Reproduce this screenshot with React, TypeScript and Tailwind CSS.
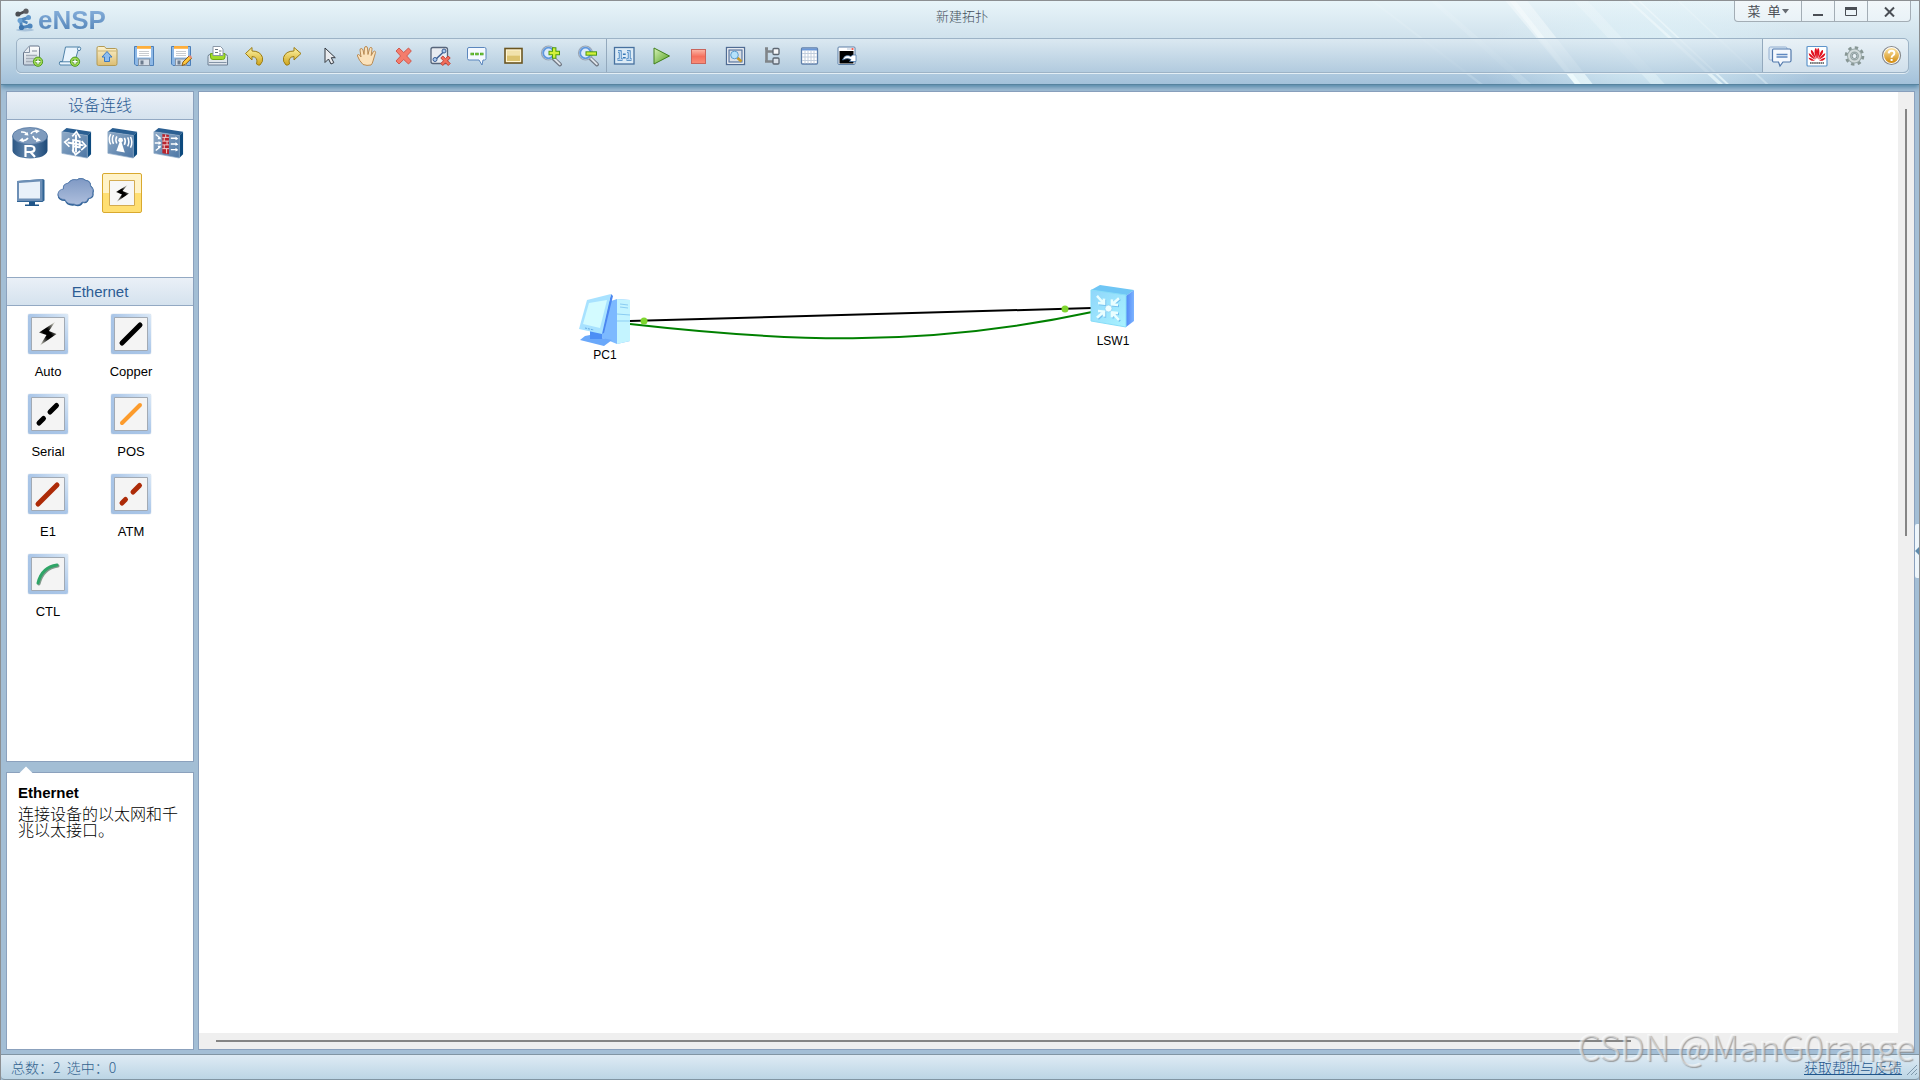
import type { ReactNode } from "react";

const CJK = "font-['Liberation_Sans','Noto_Sans_CJK_SC',sans-serif]";

type Item = { label: string; icon: ReactNode };

function Gradients() {
  return (
    <svg width="0" height="0" className="absolute" aria-hidden="true">
      <defs>
        <linearGradient id="paper" x1="0" y1="0" x2="0" y2="1">
          <stop offset="0" stopColor="#ffffff" />
          <stop offset="1" stopColor="#c9d3de" />
        </linearGradient>
        <linearGradient id="gold" x1="0" y1="0" x2="0" y2="1">
          <stop offset="0" stopColor="#fff6a8" />
          <stop offset="1" stopColor="#cfa51c" />
        </linearGradient>
        <linearGradient id="folder" x1="0" y1="0" x2="0" y2="1">
          <stop offset="0" stopColor="#fdf3cf" />
          <stop offset="1" stopColor="#dcbd72" />
        </linearGradient>
        <linearGradient id="red" x1="0" y1="0" x2="0" y2="1">
          <stop offset="0" stopColor="#fbb9a9" />
          <stop offset="0.5" stopColor="#f5705d" />
          <stop offset="1" stopColor="#f98d78" />
        </linearGradient>
        <linearGradient id="green" x1="0" y1="0" x2="1" y2="1">
          <stop offset="0" stopColor="#d8f3b8" />
          <stop offset="1" stopColor="#4f9d1d" />
        </linearGradient>
        <linearGradient id="steel" x1="0" y1="0" x2="1" y2="1">
          <stop offset="0" stopColor="#8faac7" />
          <stop offset="1" stopColor="#4d77a5" />
        </linearGradient>
        <linearGradient id="cloud" x1="0" y1="0" x2="0" y2="1">
          <stop offset="0" stopColor="#7f99c4" />
          <stop offset="1" stopColor="#aebfdd" />
        </linearGradient>
        <linearGradient id="barrel" x1="0" y1="0" x2="1" y2="0">
          <stop offset="0" stopColor="#2c5784" />
          <stop offset="0.45" stopColor="#6387ae" />
          <stop offset="1" stopColor="#1e4a79" />
        </linearGradient>
        <linearGradient id="orange" x1="0" y1="0" x2="0" y2="1">
          <stop offset="0" stopColor="#fbe3a4" />
          <stop offset="1" stopColor="#d18a0c" />
        </linearGradient>
        <linearGradient id="bolt" x1="1" y1="0" x2="0" y2="1">
          <stop offset="0.1" stopColor="#c9c9be" />
          <stop offset="0.42" stopColor="#000000" />
          <stop offset="0.6" stopColor="#000000" />
          <stop offset="0.95" stopColor="#d9d9ce" />
        </linearGradient>
        <linearGradient id="ice" x1="0" y1="0" x2="1" y2="1">
          <stop offset="0" stopColor="#8fd6fb" />
          <stop offset="1" stopColor="#a9f3ff" />
        </linearGradient>
        <linearGradient id="blueSide" x1="0" y1="0" x2="1" y2="0">
          <stop offset="0" stopColor="#4f87f5" />
          <stop offset="1" stopColor="#7db4ff" />
        </linearGradient>
      </defs>
    </svg>
  );
}

function Icon({ children }: { children: ReactNode }) {
  return (
    <svg viewBox="0 0 24 24" width="24" height="24" aria-hidden="true" fill="none">
      {children}
    </svg>
  );
}

function PlusBadge() {
  return (
    <g>
      <circle cx="17" cy="17.7" r="4.6" fill="#a4dd55" stroke="#4c9a1c" />
      <path d="M17 15v5.4M14.3 17.7h5.4" stroke="#2f7a0c" strokeWidth="2.6" />
      <path d="M17 15.2v5M14.5 17.7h5" stroke="#fff" strokeWidth="1.4" />
    </g>
  );
}

function Floppy() {
  return (
    <g>
      <path d="M2.500 2.500h19v19h-17.500l-1.500-1.500z" fill="#8db8e6" stroke="#4c7fb8" />
      <rect x="5" y="2" width="14" height="11.500" fill="#fff" />
      <rect x="5" y="2" width="14" height="2.800" fill="#fdae3c" />
      <path d="M7 7.500h10M7 9.500h10M7 11.500h10" stroke="#c9ccd0" />
      <rect x="6.500" y="15" width="11" height="6.500" fill="#d5dde6" stroke="#8594a5" />
      <rect x="8.500" y="16.500" width="3" height="4" fill="#6d7c8e" />
    </g>
  );
}

function Lens({ minus }: { minus?: boolean }) {
  return (
    <Icon>
      <path d="M14.500 14.500l6.500 6" stroke="#6f7783" strokeWidth="4" strokeLinecap="round" />
      <path d="M15 14.500l5.800 5.600" stroke="#dfe4ea" strokeWidth="2" strokeLinecap="round" />
      <circle cx="9.500" cy="9" r="7" fill="#cfe2f7" stroke="#9aa5b3" strokeWidth="1.200" />
      <circle cx="9.500" cy="9" r="5.300" fill="#dcebfb" stroke="#5f97dc" strokeWidth="1.800" />
      <path d={minus ? "M9.500 9.500h11.500" : "M9.500 9h11.500M15.200 3.200v11.600"} stroke="#4c9a10" strokeWidth="4.400" />
      <path d={minus ? "M10.500 9.500h9.500" : "M10.500 9h9.500M15.200 4.200v9.600"} stroke="#d2f03a" strokeWidth="2.400" />
    </Icon>
  );
}

const editTools: Item[] = [
  {
    label: "新建拓扑",
    icon: (
      <Icon>
        <path d="M2.500 8.500l6-6.500h8.500q1.500 0 1.500 1.500V20q0 1-1 1h-14q-1 0-1-1z" fill="url(#paper)" stroke="#67758a" />
        <path d="M2.800 8.500h5.700V2.500" stroke="#8593a5" fill="#e8edf3" />
        <path d="M11 7h5M5 11.500h11M5 14.500h11M5 17.500h8" stroke="#a5adb8" strokeWidth="1.300" />
        <PlusBadge />
      </Icon>
    ),
  },
  {
    label: "新建试卷工程",
    icon: (
      <Icon>
        <path d="M7.500 3h14.500q1.500 1.500 0 3.500h-2l-3.500 12-1.500 2.500H2q-1.500-2 0-3.500h2.500z" fill="#e9f4fd" stroke="#4f82a8" />
        <path d="M2 17.800h12" stroke="#4f82a8" />
        <path d="M20 6.500q-1.500-2 .5-3.500" stroke="#4f82a8" />
        <PlusBadge />
      </Icon>
    ),
  },
  {
    label: "打开",
    icon: (
      <Icon>
        <path d="M2 4q0-1.500 1.500-1.500h6l1.500 2h9.500q1.500 0 1.500 1.500v13.500q0 2-1.500 2h-17q-1.500 0-1.500-1.500z" fill="url(#folder)" stroke="#b39a55" />
        <path d="M2.500 7h19" stroke="#cdb473" />
        <path d="M12 7.500l5 5.500h-2.500v4.500h-5V13H7z" fill="#8dbdf0" stroke="#3e79c0" />
      </Icon>
    ),
  },
  { label: "保存", icon: <Icon><Floppy /></Icon> },
  {
    label: "另存为",
    icon: (
      <Icon>
        <Floppy />
        <path d="M13 21.500l1-3.500 6-6 2.500 2.300-6 6z" fill="#ffc83d" stroke="#8c5c14" />
        <path d="M19.500 12.500l1.500-1.500 2.200 2.200-1.400 1.400z" fill="#e58a7c" />
      </Icon>
    ),
  },
  {
    label: "打印",
    icon: (
      <Icon>
        <path d="M2 12.500q0-2 2-2h15.500q2 0 2 2v8.500H2z" fill="#dfe6ed" stroke="#6c7f92" />
        <path d="M4.500 9.500h14.500v3.500q0 2.500-2.500 2.500h-9.500q-2.500 0-2.500-2.500z" fill="#a2db2a" stroke="#6eab12" />
        <path d="M7 2.500h7.500l2.500 2.500v6.500H7z" fill="#fff" stroke="#8b98a7" />
        <path d="M9 5.500h3M13 7h2.500M9 8.500h3M13 10h2" stroke="#6a7480" />
        <path d="M3 18.500h17.500" stroke="#8494a6" />
      </Icon>
    ),
  },
  {
    label: "撤销",
    icon: (
      <Icon>
        <path d="M2.500 9.500L9 3.500v3.500q8.500 0 10.500 6.500 1 4-2.500 7.500-2 .5-3.500-1 2-7-4.500-7.500v3.500z" fill="url(#gold)" stroke="#9c7c14" strokeLinejoin="round" />
      </Icon>
    ),
  },
  {
    label: "恢复",
    icon: (
      <Icon>
        <path d="M21 9.500L14 3.500v3.500q-8.500 0-10.500 6.500-1 4 2.500 7.500 2 .5 3.500-1-2-7 4.500-7.500v3.500z" fill="url(#gold)" stroke="#9c7c14" strokeLinejoin="round" />
      </Icon>
    ),
  },
  {
    label: "选择",
    icon: (
      <Icon>
        <path d="M8 4v14.500l3.500-3.500 2.500 5 2.800-1.300-2.500-5h4z" fill="#e9ebee" stroke="#33383f" strokeLinejoin="round" />
      </Icon>
    ),
  },
  {
    label: "拖动",
    icon: (
      <Icon>
        <path d="M9 20.500q-4-4-5.500-8.500-.5-1.500 1-1.500 1.200.3 2.500 2.500L6 6q0-1.500 1.200-1.500T9 6l1 4.500L10.500 4q.2-1.500 1.500-1.500T13.500 4l.5 6.500 1.500-6q.5-1.300 1.700-1T18 5.200l-.8 6.300 2.300-4q1-1 2 .2.300.8-.3 2L19 17q-.5 2.500-2 4-4 1-8-.5z" fill="#fbe2bb" stroke="#b98a52" strokeLinejoin="round" />
      </Icon>
    ),
  },
  {
    label: "删除",
    icon: (
      <Icon>
        <path d="M5 7l3-3 4.700 4.500L17.500 4l2.800 3-4.600 5 4.600 5-2.800 3-4.800-4.500L8 20l-3-3 4.600-5z" fill="#f47c6c" stroke="#d0594e" strokeLinejoin="round" />
      </Icon>
    ),
  },
  {
    label: "删除所有连线",
    icon: (
      <Icon>
        <rect x="3" y="3.500" width="16.500" height="16" rx="2" fill="#e8ecf1" stroke="#57657a" strokeWidth="1.300" />
        <path d="M7 16L16.500 7" stroke="#3c5f94" strokeWidth="1.500" />
        <circle cx="7" cy="15.500" r="2" fill="#a8c8ee" stroke="#3c5f94" />
        <circle cx="16" cy="7" r="2" fill="#a8c8ee" stroke="#3c5f94" />
        <path d="M12.800 14l2-2 2.700 2.700L20.200 12l2 2-2.700 2.800 2.700 2.700-2 2-2.700-2.700-2.700 2.700-2-2 2.700-2.700z" fill="#f26f5c" stroke="#c33f34" />
      </Icon>
    ),
  },
  {
    label: "文本",
    icon: (
      <Icon>
        <path d="M4 3.500h15.500q1.500 0 1.500 1.500v9.500q0 1.500-1.500 1.500H18l-1 5-3-5H4q-1.500 0-1.500-1.500V5q0-1.500 1.500-1.500z" fill="#f4f9ff" stroke="#5b86bd" />
        <path d="M5.500 10h3.500M10.200 10h3.500M15 10h3.500" stroke="#3f9c1a" strokeWidth="2.400" />
        <path d="M6 10h2.500M10.700 10h2.500M15.500 10H18" stroke="#8fd94b" />
      </Icon>
    ),
  },
  {
    label: "调色板",
    icon: (
      <Icon>
        <rect x="3" y="4.500" width="17" height="14.500" fill="#fff6d5" stroke="#6b5520" strokeWidth="1.600" />
        <rect x="5" y="6.500" width="13" height="5" fill="#f1e2ac" />
        <rect x="5" y="11.500" width="13" height="5.500" fill="#dcc36f" />
      </Icon>
    ),
  },
  { label: "放大", icon: <Lens /> },
  { label: "缩小", icon: <Lens minus /> },
];

const runTools: Item[] = [
  {
    label: "原始大小",
    icon: (
      <Icon>
        <rect x="2.500" y="3.500" width="19.500" height="16.500" fill="#dcebf6" stroke="#47719f" strokeWidth="1.300" />
        <path d="M6 7.700h2.200V15M5.500 15.300h5M15 7.700h2.200V15M14.500 15.300h5M12.300 9.500v1.500M12.300 13v1.500" stroke="#3679b8" strokeWidth="2.800" />
        <path d="M6 7.700h2.200V15M5.700 15.300h4.600M15 7.700h2.200V15M14.700 15.300h4.600" stroke="#dff0ff" strokeWidth="1.100" />
      </Icon>
    ),
  },
  {
    label: "开启设备",
    icon: <Icon><path d="M5 4v16L20.500 12z" fill="url(#green)" stroke="#41801c" strokeLinejoin="round" /></Icon>,
  },
  {
    label: "停止设备",
    icon: <Icon><rect x="5.500" y="5.500" width="14" height="14" fill="url(#red)" stroke="#c9655c" /></Icon>,
  },
  {
    label: "采集数据报文",
    icon: (
      <Icon>
        <rect x="3.500" y="3.500" width="18" height="17" fill="#fff" stroke="#506c93" strokeWidth="1.300" />
        <rect x="6" y="6" width="13" height="12" fill="#d9dfe7" stroke="#5f7ba3" strokeWidth="1.300" />
        <path d="M14 13.500l4.500 4" stroke="#c79b2a" strokeWidth="2.600" />
        <circle cx="11.500" cy="11" r="3.800" fill="#b5e2fb" stroke="#5e9fd1" />
      </Icon>
    ),
  },
  {
    label: "拓扑树",
    icon: (
      <Icon>
        <path d="M6.500 3.500v14.500M6.500 7.500h7M5 17.500h8.500M5 4.500h3" stroke="#808589" strokeWidth="2.600" />
        <rect x="13" y="4.500" width="6" height="6" rx="1" fill="#f7f8fa" stroke="#5c6671" strokeWidth="1.300" />
        <rect x="13" y="14" width="6" height="6" rx="1" fill="#dbe2ea" stroke="#5c6671" strokeWidth="1.300" />
      </Icon>
    ),
  },
  {
    label: "接口列表",
    icon: (
      <Icon>
        <rect x="4.500" y="4" width="16" height="16" rx="1" fill="#fff" stroke="#6080ab" strokeWidth="1.300" />
        <path d="M5 5.500h15" stroke="#6b98d8" strokeWidth="2" />
        <path d="M5 9.500h15M5 13h15M5 16.500h15M8 6.500v13M11 6.500v13M14 6.500v13M17 6.500v13" stroke="#c2cedd" />
      </Icon>
    ),
  },
  {
    label: "命令行",
    icon: (
      <Icon>
        <rect x="4" y="3" width="17" height="17.500" rx="1" fill="#fff" stroke="#5c7fa6" />
        <rect x="5.500" y="7" width="14" height="12.500" fill="#000" />
        <path d="M13.500 5h1M15.500 5h1" stroke="#6b8db5" />
        <path d="M17.500 5h2" stroke="#f03020" strokeWidth="1.500" />
        <path d="M8.500 16q2.500-6.500 8.500-3.500l1.500-1.500h3.500v6.500h-6.500l1.500-2q-3.500-2-8.500.5z" fill="#fff" stroke="#3c6ea5" strokeWidth=".7" />
      </Icon>
    ),
  },
];

const helpTools: Item[] = [
  {
    label: "论坛",
    icon: (
      <Icon>
        <rect x="1" y="3" width="18" height="13" rx="1.500" fill="#dbe8f5" stroke="#94afd0" />
        <path d="M5.500 5h16q1.500 0 1.500 1.500v10q0 1.500-1.500 1.500H15l-3 4-1.500-4h-5q-1 0-1-1.500v-10Q4.500 5 5.500 5z" fill="#f4f8fd" stroke="#5178ab" strokeWidth="1.200" />
        <path d="M8.500 10.500h11M8.500 13h11" stroke="#5e87c0" strokeWidth="1.300" />
      </Icon>
    ),
  },
  {
    label: "华为官网",
    icon: (
      <Icon>
        <rect x="2" y="2.500" width="20" height="19.500" rx="1" fill="#fff" stroke="#5e95cb" strokeWidth="1.200" />
        <g fill="#e11220">
          <path d="M11.700 15Q8 8 10.500 4q1.500.3 1.500 4zM12.300 15q3.700-7 1.200-11-1.500.3-1.500 4z" />
          <path d="M10.900 15.200Q5 9.500 6 6q2.500-.2 5 9.200zM13.100 15.200Q19 9.500 18 6q-2.500-.2-5 9.200z" />
          <path d="M10.500 15.800q-7-3-6.800-6.500 2.300.2 6.800 6.500zM13.500 15.800q7-3 6.800-6.500-2.300.2-6.800 6.500z" />
          <path d="M10 16.700q-5.500.6-6.500-3 2.200-.2 6.500 3zM14 16.700q5.500.6 6.500-3-2.200-.2-6.500 3z" />
        </g>
        <path d="M5 19h14" stroke="#4d4d4d" strokeWidth="1.600" strokeDasharray="1.600 .5" />
      </Icon>
    ),
  },
  {
    label: "选项",
    icon: (
      <Icon>
        <circle cx="12.500" cy="12" r="8.300" stroke="#879694" strokeWidth="3" strokeDasharray="3.300 3.220" />
        <circle cx="12.500" cy="12" r="5.300" stroke="#9aa9a9" strokeWidth="4.400" />
        <circle cx="12.500" cy="12" r="5.500" stroke="#d3dcdd" strokeWidth="2" />
        <circle cx="12.500" cy="12" r="2.500" fill="#e8f0f5" stroke="#7f8f8f" />
      </Icon>
    ),
  },
  {
    label: "帮助",
    icon: (
      <Icon>
        <circle cx="12.500" cy="11.500" r="9" fill="#fff" stroke="#86888a" strokeWidth="1.200" />
        <circle cx="12.500" cy="11.500" r="7.500" fill="url(#orange)" />
        <path d="M9.700 9.300q.2-2.500 2.900-2.500t2.800 2.400q0 1.500-1.600 2.300-1.200.7-1.200 2.200M12.600 15v2" stroke="#fff" strokeWidth="2" />
      </Icon>
    ),
  },
];

function ToolGroup({ items, className }: { items: Item[]; className: string }) {
  return (
    <div className={`flex items-center gap-[13px] ${className}`}>
      {items.map((t) => (
        <button key={t.label} type="button" aria-label={t.label} className="size-6 shrink-0">
          {t.icon}
        </button>
      ))}
    </div>
  );
}

function Streaks() {
  return (
    <svg className="pointer-events-none absolute top-0 right-0 h-full" width="720" height="84" viewBox="0 0 720 84" aria-hidden="true">
      <defs>
        <radialGradient id="glow" cx="0.5" cy="0.5" r="0.5">
          <stop offset="0" stopColor="#e2f6fb" stopOpacity="0.75" />
          <stop offset="1" stopColor="#e2f6fb" stopOpacity="0" />
        </radialGradient>
        <linearGradient id="beam" x1="0" y1="0" x2="0" y2="1">
          <stop offset="0" stopColor="#fff" stopOpacity="0.3" />
          <stop offset="1" stopColor="#f2ffff" stopOpacity="0.65" />
        </linearGradient>
      </defs>
      <ellipse cx="450" cy="60" rx="170" ry="70" fill="url(#glow)" />
      <g fill="url(#beam)">
        <path d="M306 0h22l66 84h-18z" />
        <path d="M310 0h6l66 84h-6z" />
        <path d="M375 0h14l78 84h-14z" opacity=".5" />
        <path d="M430 0h3l93 84h-5z" />
        <path d="M440 0h2l90 84h-3z" />
        <path d="M480 0h2l90 84h-3z" opacity=".5" />
        <path d="M230 0h6l96 84h-10z" opacity=".25" />
        <path d="M170 0h3l110 84h-4z" opacity=".25" />
      </g>
    </svg>
  );
}

function Logo() {
  return (
    <div className="flex items-center gap-[3px]">
      <svg width="22" height="24" viewBox="0 0 22 24" aria-hidden="true" fill="none">
        <ellipse cx="12" cy="22" rx="9" ry="1.500" fill="#a9c3da" />
        <path d="M5 6.500L13 3" stroke="#4b4d52" strokeWidth="3" />
        <circle cx="5" cy="6" r="2.600" fill="#4b4d52" />
        <circle cx="13" cy="3.200" r="2.600" fill="#5c5e63" />
        <path d="M15.500 9.500L7.500 12l1 7.500 8.500-1.500" stroke="#4e86bd" strokeWidth="3" />
        <path d="M7.500 12l7 3" stroke="#4e86bd" strokeWidth="2.500" />
        <circle cx="15.500" cy="9.500" r="2.500" fill="#5e96cb" />
        <circle cx="7" cy="12.500" r="2.500" fill="#6ba2d4" />
        <circle cx="8.500" cy="19.500" r="2.600" fill="#3d75ae" />
        <circle cx="17" cy="18" r="2.600" fill="#4e86bd" />
      </svg>
      <span className="bg-linear-to-b from-[#8fb6e0] to-[#4d7fb4] bg-clip-text font-[Liberation_Sans,Arial,sans-serif] text-[26px] leading-7 font-bold text-transparent">
        eNSP
      </span>
    </div>
  );
}

function Header() {
  return (
    <header className="relative border-t border-b border-t-[#8c8f92] border-b-[#57839f] bg-linear-to-b from-[#e8f4f9] via-[#cde0eb] to-[#a3c1da] shadow-[0_2px_5px_#4d83a5]">
      <Streaks />
      <div className="relative flex h-[37px] items-start justify-between pr-2 pl-3">
        <div className="flex-1 pt-[5px]">
          <Logo />
        </div>
        <h1 className={`pt-[6px] text-[13px] leading-5 font-light text-[#44505c] ${CJK}`}>新建拓扑</h1>
        <div className="flex flex-1 justify-end">
          <div className="flex h-[21px] divide-x divide-[#a3adb5] rounded-b border border-t-0 border-[#a3adb5] bg-linear-to-b from-[#f2f7fa] to-[#e9f2f7] text-[#4a4e55]">
            <button type="button" className={`flex w-[67px] items-center justify-center gap-[1px] text-[13px] leading-none ${CJK}`}>
              <span>菜&nbsp;&nbsp;单</span>
              <svg width="7" height="5" viewBox="0 0 7 5" aria-hidden="true"><path d="M0 0h7L3.500 4.500z" fill="#666b72" /></svg>
            </button>
            <button type="button" aria-label="最小化" className="flex w-[33px] items-center justify-center">
              <svg width="12" height="12" viewBox="0 0 12 12" aria-hidden="true"><path d="M1 9h10v2H1z" fill="#4a4e55" /></svg>
            </button>
            <button type="button" aria-label="最大化" className="flex w-[33px] items-center justify-center">
              <svg width="12" height="10" viewBox="0 0 12 10" aria-hidden="true" fill="none"><path d="M.5 1.500h11v8H.5z" stroke="#4a4e55" /><path d="M0 1h12v3H0z" fill="#4a4e55" /></svg>
            </button>
            <button type="button" aria-label="关闭" className="flex w-[42px] items-center justify-center">
              <svg width="11" height="11" viewBox="0 0 11 11" aria-hidden="true"><path d="M1 1.500l9 9M10 1.500l-9 9" stroke="#4a4e55" strokeWidth="2" /></svg>
            </button>
          </div>
        </div>
      </div>
      <nav aria-label="工具栏" className="relative mr-[10px] mb-[11px] ml-[15px] flex h-[35px] rounded-[5px] border border-[#9db3c6] bg-linear-to-b from-[#dfebf3]/70 to-[#b3cbde]/70 shadow-[0_1px_0_#e3eef5]">
        <ToolGroup items={editTools} className="border-r border-[#93a9bd] pr-[6px] pl-1" />
        <ToolGroup items={runTools} className="flex-1 pl-[5px]" />
        <ToolGroup items={helpTools} className="rounded-r-[5px] border-l border-[#93a9bd] bg-white/40 pr-[5px] pl-[5px]" />
      </nav>
    </header>
  );
}

function Slab({ children }: { children: ReactNode }) {
  return (
    <svg width="32" height="32" viewBox="0 0 34 34" aria-hidden="true" fill="none">
      <path d="M2 5l5-4 26 4-4 4z" fill="#2b5f92" />
      <path d="M29 9l4-4v24l-4 4z" fill="#0d4a7e" />
      <path d="M2 5l27 4v24L2 28z" fill="url(#steel)" stroke="#90abc8" strokeWidth=".7" />
      {children}
    </svg>
  );
}

const devices: Item[] = [
  {
    label: "路由器",
    icon: (
      <svg width="36" height="32" viewBox="0 0 36 32" aria-hidden="true" fill="none">
        <path d="M.5 9v15q2 7 17.500 7.500 15.500-.5 17.500-7.500V9z" fill="url(#barrel)" />
        <ellipse cx="18" cy="9" rx="17.500" ry="8.500" fill="#7f9bbd" stroke="#496f9b" strokeWidth=".7" />
        <path d="M15 7.500Q14 4.500 9 5M19 7q1-3 6-3M16 11q-2 3-7 2.500M21 9q1 4 6 4" stroke="#fff" strokeWidth="1.500" />
        <path d="M16.500 8.500l-4.500-.5 3.500-3zM23 2.200L28 4l-4 2.500zM10.500 10.800L7 13.500l5 1.800zM25 10.500l4 3-5 1.500z" fill="#fff" />
        <path d="M13.500 30V19h5.500q3.500.3 3.500 3T19 25h-5M18.500 25L23 30" stroke="#fff" strokeWidth="2.200" />
      </svg>
    ),
  },
  {
    label: "交换机",
    icon: (
      <Slab>
        <path d="M17 8v19M8 16.500l17 3M14 27V14l7 1.200v6.500L14 20.500" stroke="#fff" strokeWidth="2" />
        <path d="M13 10l4.500-5 4 6.500M13 24l3.500 5.500 5-4M10 12l-5 4 5 5M23 15l4.500 5-5 4.500" stroke="#fff" strokeWidth="1.800" />
      </Slab>
    ),
  },
  {
    label: "无线局域网",
    icon: (
      <Slab>
        <path d="M15.500 13l4.500 14-9-1.500z" fill="#fff" />
        <circle cx="15.500" cy="14" r="2.500" fill="#fff" />
        <path d="M11.500 10q-2 3.500 0 7.500M8 8.500q-2.500 4.500 0 9.500M5 7.500q-3 5.500 0 11M19.500 11.500q2 3.500 0 7.500M23 11q2.500 4.500 0 9.500M26 10.500q3 6 0 11.500" stroke="#fff" strokeWidth="1.600" />
      </Slab>
    ),
  },
  {
    label: "防火墙",
    icon: (
      <Slab>
        <path d="M11 7.500l7 1V29l-7-1.200z" fill="#b8232c" />
        <path d="M11 11h7M11 15h7M11 19h7M11 23h7M14.500 8v3M13 11v4M16 15v4M13 19v4M15.500 23v5" stroke="#f1dada" />
        <path d="M4 8l5 4M3 17h6M4 25l5-4M20 12h6M20 18h6M20 24h6" stroke="#fff" strokeWidth="1.500" />
        <path d="M25 10l3 2.500-3 1.500zM25 16l3 2.500-3 1.500zM25 22l3 2.500-3 1.500zM7 10l3 3H6zM7 15l3 2-3 2zM7 23l3-3H6z" fill="#fff" />
      </Slab>
    ),
  },
  {
    label: "终端",
    icon: (
      <svg width="32" height="32" viewBox="0 0 32 32" aria-hidden="true">
        <path d="M3 4l26-2 1.500 1v20.500l-2 1.500H3z" fill="#2f6394" />
        <path d="M3 4l25.500-2v22H3z" fill="#6d8fb6" />
        <path d="M5 6l21-1.500V21.500H5z" fill="#e9f1fa" />
        <path d="M15 25h6v2.500h4V29H11v-1.500h4z" fill="#1f5588" />
      </svg>
    ),
  },
  {
    label: "其它设备",
    icon: (
      <svg width="38" height="32" viewBox="0 0 38 32" aria-hidden="true">
        <path d="M8 24q-7 0-7.500-6Q1 13 6 12.500 5 7 11 6q3-5 9-3.500 4-3 9 .5 5 .5 5 5.500 4 3.500 2.500 7.500 1 5-4.500 6-1 5-6 4-3 5-8.500 2.500Q10 29.500 8 24z" fill="#2a5f95" />
        <path d="M8 22.500q-6.500 0-7-5.500.5-4.500 5.500-5-1-5 5-6 3-4.500 8.500-3 4-3 8.500.5 5 .5 5 5.500 4 3.500 2 7 1 4.500-4.500 5.500-1 4.500-6 3.500-3 4.500-8 2Q10 27.500 8 22.500z" fill="url(#cloud)" stroke="#5c7fb0" strokeWidth=".8" />
      </svg>
    ),
  },
  {
    label: "设备连线",
    icon: (
      <svg width="26" height="26" viewBox="0 0 26 26" aria-hidden="true">
        <path d="M.5.5h25v25H.5z" fill="#f7f7f7" stroke="#d3ab52" />
        <path d="M18.500 5L7 12l6 2.500L7.500 22 20 13.500l-6.500-2.500z" fill="url(#bolt)" />
      </svg>
    ),
  },
];

const line = (d: string, color: string, width = 5) => (
  <path d={d} stroke={color} strokeWidth={width} strokeLinecap="round" fill="none" />
);

const cables: Item[] = [
  { label: "Auto", icon: <path d="M24 5L8 15.500l7.500 2.500L9 28.500 25.500 17l-7.500-3z" fill="url(#bolt)" /> },
  { label: "Copper", icon: line("M8 26L26 8", "#000") },
  { label: "Serial", icon: line("M8 26l4.500-4.500M19 15l6.500-6.500", "#000") },
  { label: "POS", icon: line("M8 26L26 8", "#fc9b2c", 4) },
  { label: "E1", icon: line("M7 27L26 8", "#ad2b08") },
  { label: "ATM", icon: line("M8 26l3.500-3.500M19 15l6.500-6.500", "#ad2b08") },
  {
    label: "CTL",
    icon: (
      <g>
        {line("M8 27Q12 11 27 9", "#83998c", 3)}
        {line("M7 26Q11 10 26 8", "#2fa567", 3)}
      </g>
    ),
  },
];

function SectionTitle({ children, className }: { children: ReactNode; className: string }) {
  return (
    <h2 className={`flex h-7 items-center justify-center border-b border-[#93a9c3] bg-linear-to-b from-[#eaf0f7] to-[#d5e2ee] pt-px font-light text-[#2c5c94] ${CJK} ${className}`}>
      {children}
    </h2>
  );
}

function Sidebar() {
  return (
    <aside className="flex w-[188px] shrink-0 flex-col">
      <section className="flex-[716] border border-[#8ba1bd] bg-white">
        <SectionTitle className="text-base">设备连线</SectionTitle>
        <div className="h-[158px] border-b border-[#93a9c3]">
          <div className="grid grid-cols-[repeat(4,46px)] grid-rows-[46px_54px]">
            {devices.map((d) => (
              <button
                key={d.label}
                type="button"
                aria-label={d.label}
                className={
                  d.label === "设备连线"
                    ? "flex size-10 items-center justify-center place-self-center rounded-xs border border-[#d9a92e] bg-linear-to-b from-[#fff3c8] from-50% to-[#ffdf73] to-50%"
                    : "flex items-center justify-center"
                }
              >
                {d.icon}
              </button>
            ))}
          </div>
        </div>
        <SectionTitle className="text-[15px]">Ethernet</SectionTitle>
        <div className="grid grid-cols-[repeat(2,83px)] pt-2">
          {cables.map((c) => (
            <button key={c.label} type="button" className="flex h-20 flex-col items-center pr-px font-[Liberation_Sans,Arial,sans-serif] text-[13px] leading-4 text-black">
              <span className="flex size-10 items-center justify-center rounded-xs bg-linear-to-bl from-[#dbe9f7] via-[#aac6e8] to-[#a3c0e2] shadow-[0_0_1px_#7796b8]">
                <svg width="34" height="34" viewBox="0 0 34 34" aria-hidden="true">
                  <path d="M.5.5h33v33H.5z" fill="#f4f4f4" stroke="#a2aab4" />
                  {c.icon}
                </svg>
              </span>
              <span className="mt-[10px]">{c.label}</span>
            </button>
          ))}
        </div>
      </section>
      <section className="relative mt-[10px] flex-[284] border border-[#8ba1bd] bg-white px-[11px] pt-[11px] text-black">
        <svg className="absolute -top-[7px] left-3" width="14" height="8" viewBox="0 0 14 8" aria-hidden="true">
          <path d="M0 7.500L7 .5l7 7z" fill="#fff" />
        </svg>
        <h3 className="font-[Liberation_Sans,Arial,sans-serif] text-[15px] leading-[18px] font-bold">Ethernet</h3>
        <p className={`mt-[5px] text-base leading-4 font-light ${CJK}`}>连接设备的以太网和千兆以太接口。</p>
      </section>
    </aside>
  );
}

function SwitchArrows() {
  return <path d="M-11-11l7 7M-4-9v5h-6M11-11L4-4M4-9v5h6M-11 11l7-7M-4 9V4h-6M11 11L4 4M4 9V4h6" />;
}

function Canvas() {
  return (
    <main className="grid min-w-0 flex-1 grid-cols-[1fr_16px] grid-rows-[1fr_16px] border border-[#8ba1bd] bg-[#efefef]">
      <div className="relative overflow-hidden bg-white font-[Liberation_Sans,Arial,sans-serif] text-xs leading-4 text-black">
        <svg className="absolute top-[190px] left-[420px]" width="500" height="70" viewBox="619 282 500 70" aria-hidden="true" fill="none">
          <path d="M630 324C780 341 920 349 1092 312" stroke="#008000" strokeWidth="2" />
          <path d="M630 321L1092 308" stroke="#000" strokeWidth="2" />
          <circle cx="644" cy="321" r="3.500" fill="#7fd62f" />
          <circle cx="1065" cy="309" r="3.500" fill="#7fd62f" />
        </svg>
        <figure className="absolute top-[202px] left-[379px] flex w-[54px] flex-col items-center">
          <svg width="54" height="53" viewBox="0 0 54 53" aria-hidden="true">
            <path d="M27 9l12-4 13 1v41l-13 3-17-7z" fill="#7cb9ff" />
            <path d="M39 5l13 1v41l-13 3z" fill="#c4f4ff" />
            <path d="M42 10l8 1M42 13l8 1M39 20l13 1M39 27h13" stroke="#8bcdf3" />
            <path d="M12 36h12v8l10 2-8 6-24-6 5-4 5-1z" fill="#6aa8fa" />
            <path d="M12 36h12v9H12z" fill="#4c8ef5" />
            <path d="M33 0l2 2-9 37-3 1z" fill="#4b86f0" />
            <path d="M9 6L33 0l-9 40L1 35z" fill="#a8e2ff" />
            <path d="M11 9l18-3-7 28L5 30z" fill="#d3fbff" />
            <path d="M7 34l9 2" stroke="#65a8e0" strokeDasharray="2 1" />
          </svg>
          <figcaption>PC1</figcaption>
        </figure>
        <figure className="absolute top-[191px] left-[891px] flex w-[46px] flex-col items-center">
          <svg width="46" height="46" viewBox="0 0 46 46" aria-hidden="true" fill="none">
            <path d="M1 7l9-5 34 5-8 6z" fill="#6fc6f5" />
            <path d="M36 13l8-6v31l-8 6z" fill="url(#blueSide)" />
            <path d="M1 7l35 5v32L1 38z" fill="url(#ice)" stroke="#87ddf8" />
            <g transform="translate(19 26) skewY(6)" stroke="#74c0ee" strokeWidth="2.400"><SwitchArrows /></g>
            <g transform="translate(18 25) skewY(6)" stroke="#e9feff" strokeWidth="2.600"><SwitchArrows /></g>
            <circle cx="18.500" cy="25.500" r="3.500" fill="#effeff" stroke="#8cd0f2" strokeWidth=".7" />
          </svg>
          <figcaption className="mt-1">LSW1</figcaption>
        </figure>
      </div>
      <div className="flex justify-center pt-[17px] pb-4">
        <div className="h-[47%] w-[2px] bg-[#858585]" />
      </div>
      <div className="flex items-center pr-[17px] pl-[17px]">
        <div className="h-[2px] w-[85%] bg-[#858585]" />
      </div>
    </main>
  );
}

function StatusBar() {
  return (
    <footer className="flex h-[26px] items-center justify-between rounded-b border-t border-b border-t-[#8195a3] border-b-[#8195a3] bg-linear-to-b from-[#deebf4] to-[#bcd5e5] pl-[10px] font-['Noto_Sans_CJK_SC',sans-serif] text-sm leading-5 font-light text-[#34648f]">
      <p>总数：2&nbsp; 选中：0</p>
      <div className="flex items-end gap-[5px]">
        <a href="#help" className="text-[#1f568c] underline">获取帮助与反馈</a>
        <svg width="12" height="14" viewBox="0 0 12 14" aria-hidden="true"><path d="M0 12L10 2M4 12l6-6M8 12l2-2" stroke="#7f99ad" /></svg>
      </div>
    </footer>
  );
}

export default function App() {
  return (
    <div className="relative flex h-screen flex-col overflow-hidden border-r border-l border-[#8c8f92] bg-[#a3bed5]">
      <Gradients />
      <Header />
      <div className="flex min-h-0 flex-1 gap-1 pt-[6px] pb-1 pl-[5px]">
        <Sidebar />
        <Canvas />
        <button type="button" aria-label="展开右侧面板" className="-ml-1 flex h-[54px] w-1 shrink-0 -translate-y-5 items-center self-center rounded-l-xs bg-[#eef6fb]">
          <svg width="4" height="8" viewBox="0 0 4 8" aria-hidden="true"><path d="M4 0v8L0 4z" fill="#5f8cad" /></svg>
        </button>
      </div>
      <StatusBar />
      <p className="pointer-events-none absolute right-[4px] bottom-[11px] font-['Noto_Sans_CJK_SC',sans-serif] text-[36px] leading-[48px] font-light whitespace-nowrap text-[#ececec]/50 [text-shadow:1px_1px_1px_#8a8a8acc,-1px_-1px_0_#ffffff80]">
        CSDN @ManG0range
      </p>
    </div>
  );
}
